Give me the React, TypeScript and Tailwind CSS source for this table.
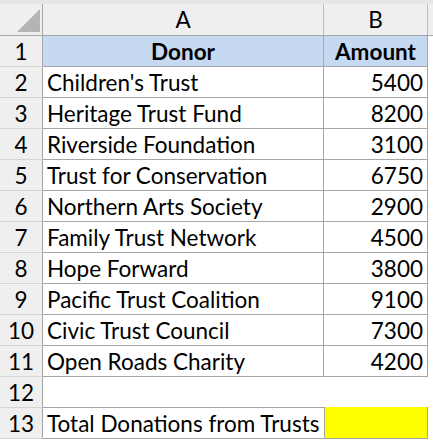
const rows: [string, string][] = [
  ["Children's Trust", "5400"],
  ["Heritage Trust Fund", "8200"],
  ["Riverside Foundation", "3100"],
  ["Trust for Conservation", "6750"],
  ["Northern Arts Society", "2900"],
  ["Family Trust Network", "4500"],
  ["Hope Forward", "3800"],
  ["Pacific Trust Coalition", "9100"],
  ["Civic Trust Council", "7300"],
  ["Open Roads Charity", "4200"],
];

const font = { fontFamily: "Lato, 'Open Sans', sans-serif" };

function RowHead({ n }: { n: number }) {
  return (
    <div className="w-[43px] shrink-0 bg-[#efefef] border-r border-r-[#a6a6a6] border-b border-b-[#d4d4d4] flex items-center justify-center pt-[2px]">
      {n}
    </div>
  );
}

export default function App() {
  return (
    <div className="w-[433px] h-[442px] bg-white text-black text-[22.5px] leading-none overflow-hidden" style={font}>
      <div className="h-[4px] bg-[#e6e6e6]" />
      {/* column headers */}
      <div className="flex h-[32px] bg-[#efefef] border-b border-b-[#a6a6a6]">
        <div className="w-[43px] shrink-0 border-r border-r-[#a6a6a6] relative">
          <div className="absolute left-[17px] top-[5px] w-[23px] h-[23px] bg-[#b4b4b4] [clip-path:polygon(100%_0,100%_100%,0_100%)]" />
        </div>
        <div className="w-[281px] shrink-0 border-r border-r-[#bcbcbc] flex items-center justify-center pt-[2px]">A</div>
        <div className="w-[104px] shrink-0 border-r border-r-[#bcbcbc] flex items-center justify-center pt-[2px]">B</div>
        <div className="flex-1" />
      </div>
      {/* row 1 */}
      <div className="flex h-[31px]">
        <RowHead n={1} />
        <div className="w-[281px] shrink-0 bg-[#c5d9f1] border-r border-b border-[#a6a6a6] flex items-center justify-center font-bold pt-[2px]">Donor</div>
        <div className="w-[104px] shrink-0 bg-[#c5d9f1] border-r border-b border-[#a6a6a6] flex items-center justify-center font-bold pt-[2px]">Amount</div>
      </div>
      {rows.map(([name, amt], i) => (
        <div key={name} className="flex h-[31px]">
          <RowHead n={i + 2} />
          <div className="w-[281px] shrink-0 border-r border-b border-[#a6a6a6] flex items-center pl-[4px] pt-[2px]">{name}</div>
          <div className="w-[104px] shrink-0 border-r border-b border-[#a6a6a6] flex items-center justify-end pr-[4px] pt-[2px]">{amt}</div>
        </div>
      ))}
      {/* row 12 */}
      <div className="flex h-[31px]">
        <RowHead n={12} />
        <div className="w-[281px] shrink-0 border-b border-[#a6a6a6]" />
        <div className="w-[104px] shrink-0" />
      </div>
      {/* row 13 */}
      <div className="flex h-[31px]">
        <RowHead n={13} />
        <div className="w-[282px] shrink-0 border-b border-[#a6a6a6] flex items-center pl-[4px] pt-[2px]">Total Donations from Trusts</div>
        <div className="w-[104px] shrink-0 bg-[#ffff00] border-l border-r border-b border-[#a6a6a6] -ml-[1px] -mt-[1px] h-[32px]" />
      </div>
    </div>
  );
}
